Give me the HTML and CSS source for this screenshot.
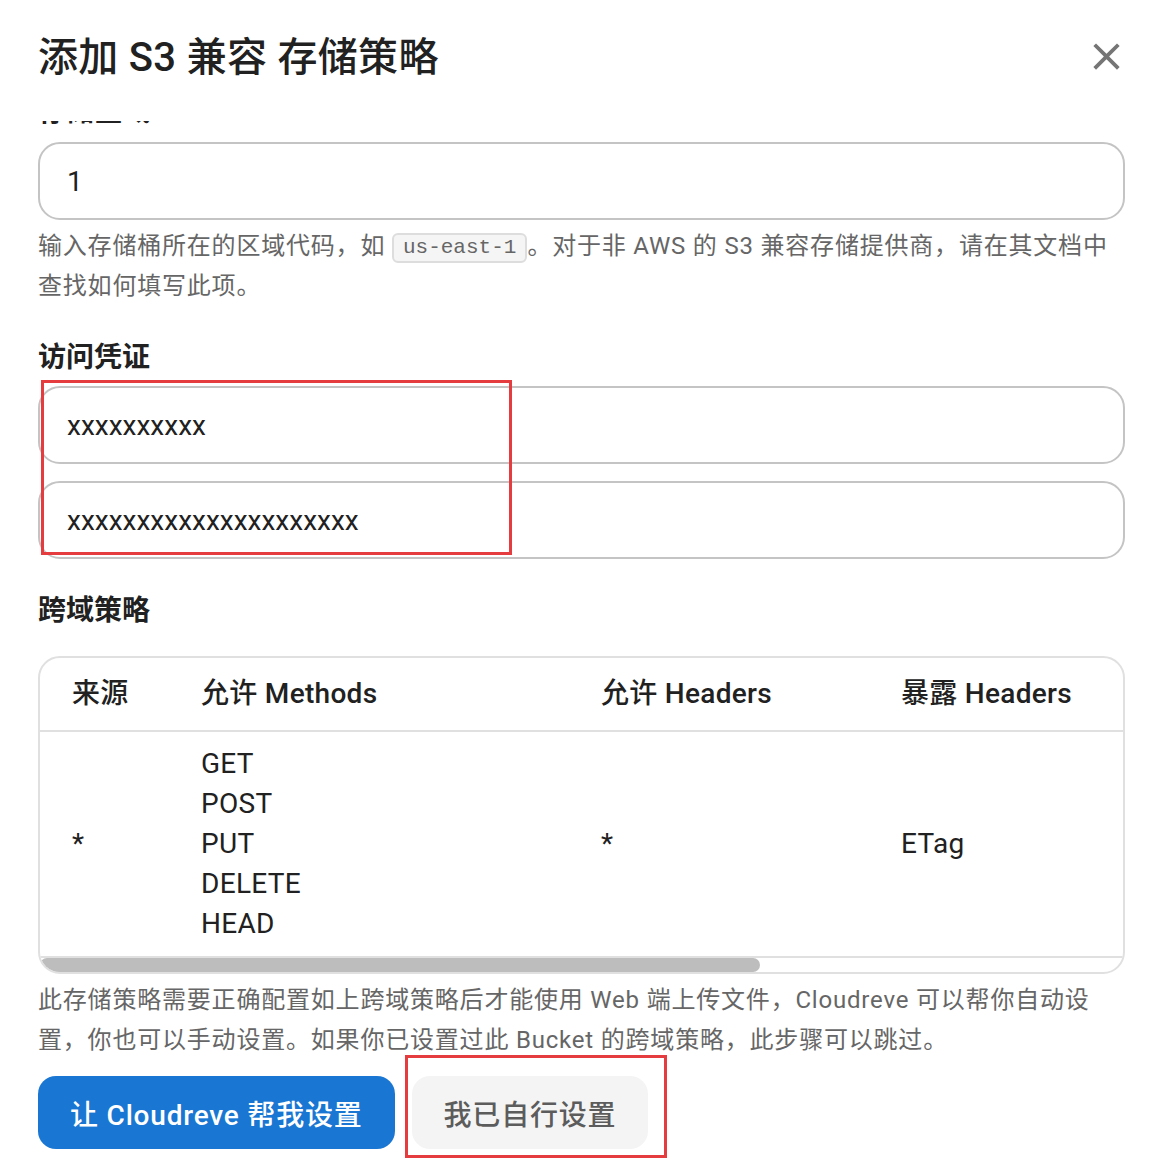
FILE: index.html
```html
<!DOCTYPE html>
<html lang="zh-CN">

<head>
	<meta charset="UTF-8">
	<meta name="viewport" content="width=device-width, initial-scale=1.0">
	<title>添加 S3 兼容 存储策略</title>
	<link rel="stylesheet" href="styles.css">
</head>

<body>
	<div class="dialog">
		<div class="dialog-title">
			<h2>添加 S3 兼容 存储策略</h2>
			<button class="close-btn" aria-label="close">
				<svg viewBox="0 0 24 24" width="45" height="45">
					<path d="M19 6.41 17.59 5 12 10.59 6.41 5 5 6.41 10.59 12 5 17.59 6.41 19 12 13.41 17.59 19 19 17.59 13.41 12z" fill="#757575" />
				</svg>
			</button>
		</div>

		<div class="dialog-content">
			<div class="section first">
				<div class="field-label">存储区域</div>
				<div class="input">1</div>
				<p class="helper">输入存储桶所在的区域代码，如 <code>us-east-1</code>。对于非 AWS 的 S3 兼容存储提供商，请在其文档中查找如何填写此项。</p>
			</div>

			<div class="section">
				<div class="field-label">访问凭证</div>
				<div class="input">xxxxxxxxxx</div>
				<div class="input">xxxxxxxxxxxxxxxxxxxxx</div>
			</div>

			<div class="section">
				<div class="field-label">跨域策略</div>
				<div class="table-box">
					<table class="cors">
						<thead>
							<tr>
								<th class="col-origin">来源</th>
								<th class="col-methods">允许 Methods</th>
								<th class="col-headers">允许 Headers</th>
								<th>暴露 Headers</th>
							</tr>
						</thead>
						<tbody>
							<tr>
								<td>*</td>
								<td>GET<br>POST<br>PUT<br>DELETE<br>HEAD</td>
								<td>*</td>
								<td>ETag</td>
							</tr>
						</tbody>
					</table>
					<div class="scroll-track">
						<div class="scroll-thumb"></div>
					</div>
				</div>
				<p class="helper">此存储策略需要正确配置如上跨域策略后才能使用 Web 端上传文件，Cloudreve 可以帮你自动设置，你也可以手动设置。如果你已设置过此 Bucket 的跨域策略，此步骤可以跳过。</p>
			</div>

			<div class="actions">
				<button class="btn btn-primary">让 Cloudreve 帮我设置</button>
				<button class="btn btn-grey">我已自行设置</button>
			</div>
		</div>
	</div>

	<!-- annotation boxes -->
	<div class="mark mark-keys"></div>
	<div class="mark mark-skip"></div>
</body>

</html>
```

FILE: styles.css
```css
* {
	margin: 0;
	padding: 0;
	box-sizing: border-box;
}

body {
	position: relative;
	width: 1169px;
	height: 1171px;
	overflow: hidden;
	background: #fff;
	color: #212121;
	font-family: Roboto, "Noto Sans CJK SC", sans-serif;
}

.dialog {
	width: 1087px;
	margin-left: 38px;
}

.dialog-title {
	display: flex;
	justify-content: space-between;
	align-items: flex-start;
	height: 121px;
	padding-top: 30px;
}

.dialog-title h2 {
	margin-top: 3px;
	font-size: 40px;
	font-weight: 500;
	line-height: 50px;
	letter-spacing: 0.3px;
}

.close-btn {
	width: 45px;
	height: 45px;
	margin-top: 4px;
	margin-right: -4px;
	border: none;
	background: none;
}

.close-btn svg {
	display: block;
}

.dialog-content {
	height: 1050px;
	overflow: hidden;
}

.section {
	margin-bottom: 32px;
}

/* scrolled: only the bottom of the first label peeks out */
.section.first {
	margin-top: -29px;
}

.field-label {
	font-size: 28px;
	font-weight: 600;
	line-height: 40px;
	margin-bottom: 8px;
}

.section.first .field-label {
	margin-bottom: 10px;
}

.input {
	height: 78px;
	padding: 0 27px;
	display: flex;
	align-items: center;
	border: 2px solid #c4c4c4;
	border-radius: 22px;
	font-size: 28px;
	color: #212121;
}

.input+.input {
	margin-top: 17px;
}

.helper {
	margin-top: 6px;
	font-size: 24px;
	line-height: 40px;
	letter-spacing: 0.8px;
	color: #666;
}

.helper code {
	display: inline-block;
	padding: 0 9px;
	font-family: "Liberation Mono", monospace;
	font-size: 21px;
	line-height: 26px;
	letter-spacing: 0;
	color: #666;
	background: #f5f5f5;
	border: 2px solid #ddd;
	border-radius: 6px;
	vertical-align: 1px;
}

.table-box {
	margin-top: 25px;
	border: 2px solid #e0e0e0;
	border-radius: 22px;
	overflow: hidden;
}

.cors {
	width: 1632px;
	border-collapse: collapse;
	font-size: 28px;
	letter-spacing: 0.3px;
	text-align: left;
}

.cors th,
.cors td {
	padding: 12px 32px;
	border-bottom: 2px solid #e0e0e0;
	vertical-align: middle;
}

.cors th {
	font-weight: 500;
	line-height: 48px;
}

.cors td {
	font-weight: 400;
	line-height: 40px;
}

.col-origin {
	width: 129px;
}

.col-methods {
	width: 400px;
}

.col-headers {
	width: 300px;
}

.scroll-track {
	height: 14px;
}

.scroll-thumb {
	width: 66.5%;
	height: 14px;
	border-radius: 7px;
	background: #bdbdbd;
}

.actions {
	display: flex;
	gap: 17px;
	margin-top: -16px;
}

.btn {
	height: 73px;
	padding: 0 32px;
	border: none;
	border-radius: 18px;
	font-family: Roboto, "Noto Sans CJK SC", sans-serif;
	font-size: 28px;
	font-weight: 500;
	letter-spacing: 0.8px;
}

.btn-primary {
	background: #1976d2;
	color: #fff;
}

.btn-grey {
	background: #f4f4f4;
	color: #5c5c5c;
}

.mark {
	position: absolute;
	border: 3px solid #e53c3f;
}

.mark-keys {
	left: 41px;
	top: 380px;
	width: 471px;
	height: 175px;
}

.mark-skip {
	left: 405px;
	top: 1055px;
	width: 262px;
	height: 103px;
}
```
